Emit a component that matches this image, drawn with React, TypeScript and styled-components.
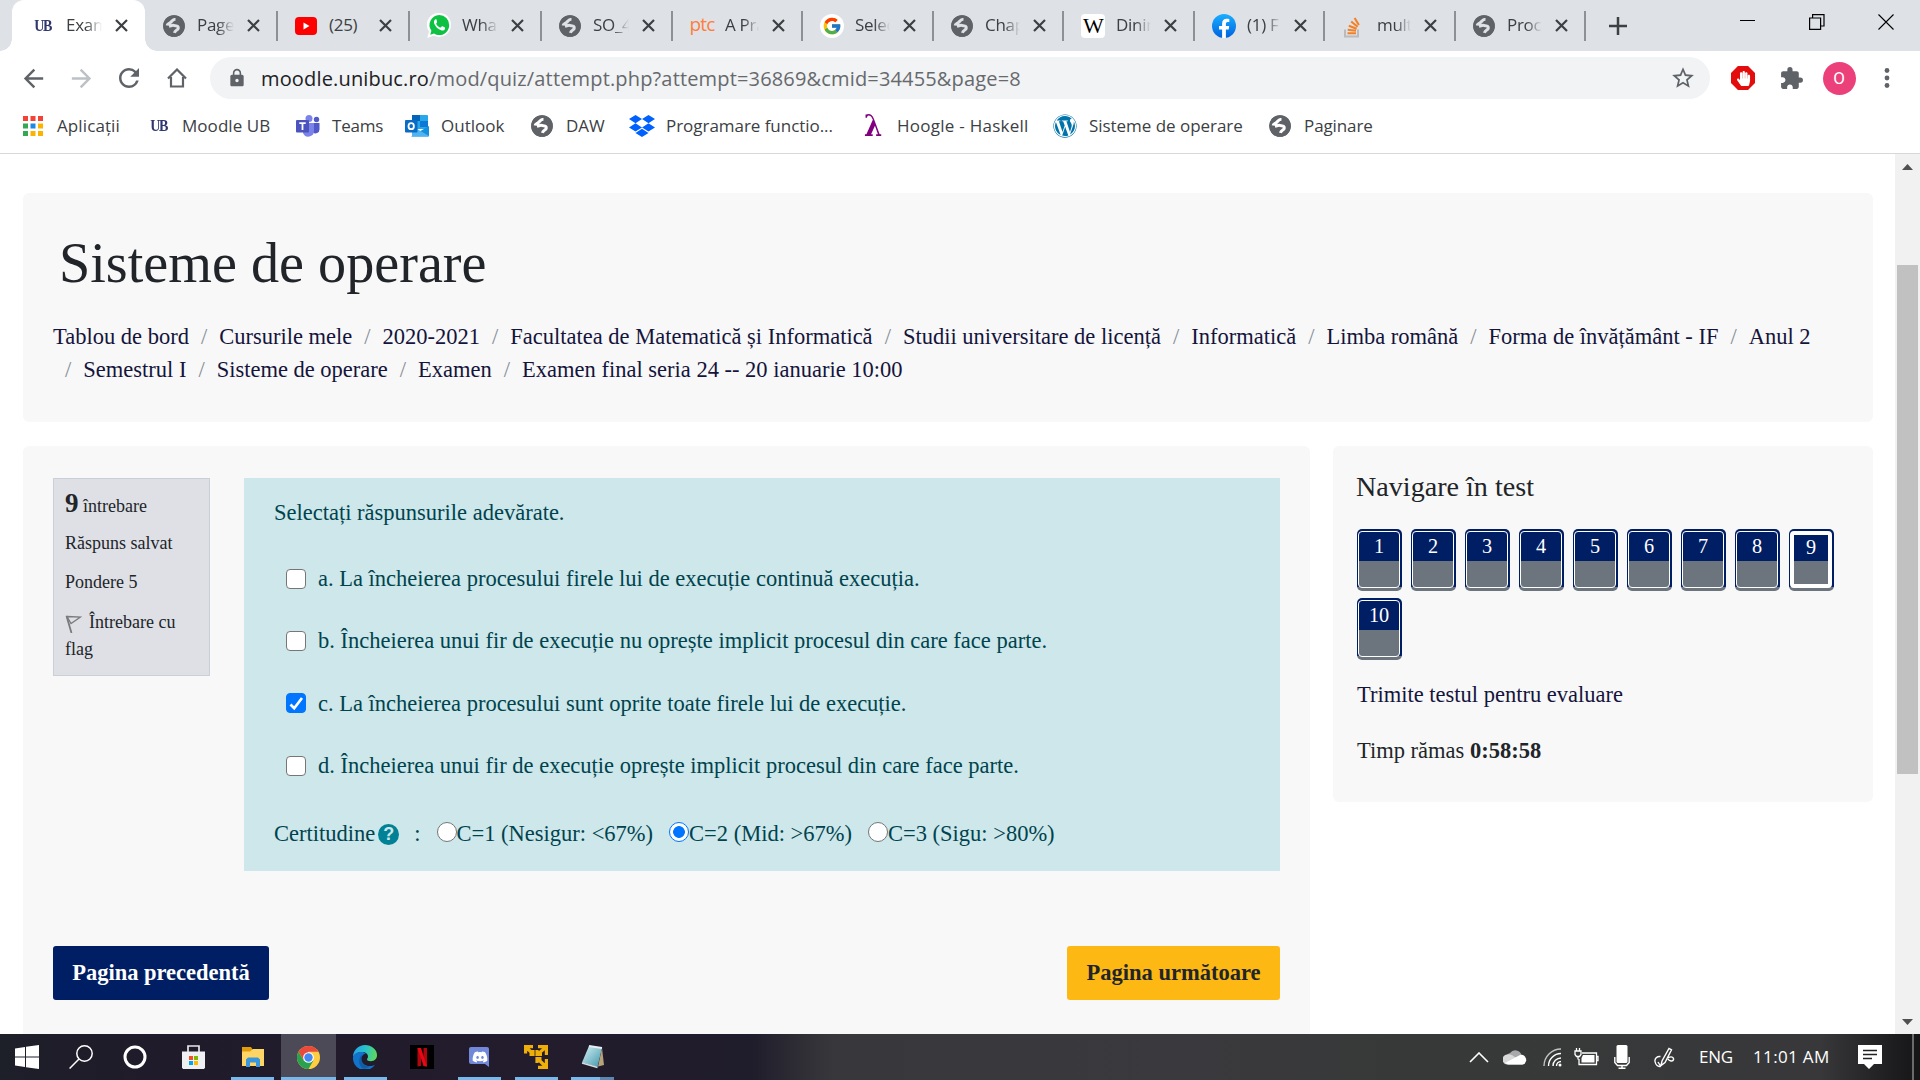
import React from "react";
import styled, { createGlobalStyle, css } from "styled-components";
import { FaWordpress, FaDropbox, FaDiscord, FaHandPaper } from "react-icons/fa";
import { FcGoogle } from "react-icons/fc";
import { MdExtension, MdLock, MdRefresh, MdStarBorder, MdArrowBack, MdArrowForward } from "react-icons/md";

const Global = createGlobalStyle`
  * { box-sizing: border-box; }
  html, body { margin: 0; padding: 0; background: #fff; overflow: hidden; }
  svg { display: block; flex: none; }
`;

const ui = `"Open Sans", "Noto Sans", sans-serif`;
const serif = `"Liberation Serif", "Times New Roman", serif`;

const Screen = styled.div`
  width: 1920px;
  height: 1080px;
  display: flex;
  flex-direction: column;
  overflow: hidden;
  font-family: ${ui};
`;

/* ---------- tab strip ---------- */

const TabStrip = styled.div`
  height: 51px;
  flex: none;
  display: flex;
  background: #dee1e6;
  padding-left: 12px;
`;

const TabBox = styled.div<{ $w: number; $active?: boolean; $line?: boolean }>`
  position: relative;
  width: ${(p) => p.$w}px;
  height: 51px;
  flex: none;
  display: flex;
  align-items: center;
  padding-left: 18px;
  ${(p) =>
    p.$active &&
    css`
      background: #fff;
      border-radius: 12px 12px 0 0;
      padding-left: 20px;
      &::before,
      &::after {
        content: "";
        position: absolute;
        bottom: 0;
        width: 12px;
        height: 12px;
      }
      &::before {
        left: -12px;
        background: radial-gradient(circle at 0 0, #dee1e6 11.5px, #fff 12px);
      }
      &::after {
        right: -12px;
        background: radial-gradient(circle at 100% 0, #dee1e6 11.5px, #fff 12px);
      }
    `}
  ${(p) =>
    p.$line &&
    css`
      &::after {
        content: "";
        position: absolute;
        right: -1px;
        top: 11px;
        width: 2px;
        height: 30px;
        background: #8d9095;
      }
    `}
`;

const IconSlot = styled.span<{ $w?: number }>`
  width: ${(p) => p.$w ?? 24}px;
  flex: none;
  display: flex;
  justify-content: center;
  align-items: center;
`;

const TabTitle = styled.span<{ $w?: number; $ml?: number; $full?: boolean }>`
  width: ${(p) => p.$w ?? 36}px;
  margin-left: ${(p) => p.$ml ?? 11}px;
  overflow: hidden;
  white-space: nowrap;
  font-size: 17px;
  line-height: 26px;
  letter-spacing: -0.3px;
  color: #3c4043;
  padding-bottom: 1px;
  ${(p) => !p.$full && css`
    -webkit-mask-image: linear-gradient(90deg, #000 55%, transparent 100%);
    mask-image: linear-gradient(90deg, #000 55%, transparent 100%);
  `}
`;

const TabClose = styled.span`
  margin-left: 13px;
  display: flex;
`;

const NewTab = styled.span`
  width: 66px;
  display: flex;
  align-items: center;
  justify-content: center;
`;

const WindowControls = styled.div`
  margin-left: auto;
  width: 207px;
  height: 43px;
  display: grid;
  grid-template-columns: repeat(3, 69px);
  align-items: center;
  justify-items: center;
`;

const Crest = styled.span`
  font-family: ${serif};
  font-weight: bold;
  font-size: 16px;
  line-height: 20px;
  letter-spacing: -1.4px;
  color: #30376f;
  transform: scaleX(0.88);
`;

const Ptc = styled.span`
  font-family: ${ui};
  font-weight: 500;
  font-size: 19px;
  letter-spacing: -0.9px;
  line-height: 20px;
  padding-bottom: 3px;
  color: #ff7e3b;
`;

const WikiTile = styled.span`
  width: 24px;
  height: 24px;
  border-radius: 4px;
  background: #fff;
  font-family: ${serif};
  font-size: 22px;
  line-height: 24px;
  letter-spacing: -1px;
  text-align: center;
  color: #000;
`;

const Disc = styled.span<{ $c: string }>`
  width: 24px;
  height: 24px;
  border-radius: 50%;
  background: ${(p) => p.$c};
  display: flex;
  align-items: center;
  justify-content: center;
`;

const Globe = ({ land = "#dee1e6" }: { land?: string }) => (
  <svg width="22" height="22" viewBox="0 0 22 22" fill="none">
    <circle cx="11" cy="11" r="10.800" fill="#5f6368" />
    <path
      d="M12.500 4.300C8.800 4.200 9.200 7 6.300 8.300c-1 .6-2.100 1-2.300 2.200M6 11.200c2.500-.5 2.200-1 5-.8 3.200.2 4.800 1.200 4.200 3.200-.6 1.700-3 1.300-3.800 4.300"
      stroke={land}
      strokeWidth="3"
    />
    <circle cx="11" cy="11" r="9.700" stroke="#5f6368" strokeWidth="2.200" />
  </svg>
);

const YouTube = () => (
  <svg width="22" height="22" viewBox="0 0 22 22">
    <rect y="2" width="22" height="18" rx="4" fill="#f00" />
    <path d="M8.500 7.500v7l6-3.500z" fill="#fff" />
  </svg>
);

const WhatsApp = () => (
  <svg width="24" height="26" viewBox="0 0 24 26">
    <path d="M12.300 0A11.600 11.600 0 0 1 24 12.300c0 6.500-5.200 11.600-11.700 11.600-2 0-3.900-.5-5.500-1.400L.3 25l1.700-6.500A11.800 11.800 0 0 1 12.300 0z" fill="#fff" />
    <path d="M12.300 2A10 10 0 0 1 22.200 12.200c0 5.500-4.500 9.900-9.900 9.900-1.900 0-3.700-.5-5.200-1.500L3.200 21.800l1.200-4A10 10 0 0 1 12.300 2z" fill="#0dc143" />
    <path d="M9.600 6.800c-.3-.6-.9-.6-1.400-.2-1.200 1-1.600 2.400-.8 4.300 1.300 3 3.700 5.300 6.800 6.400 1.500.6 3.200-.1 3.700-1.400.3-.9.200-1.300-.3-1.600l-2.100-1c-.6-.2-.9.1-1.500.9-.3.400-.6.400-1.100.2-1.800-.8-2.900-2-3.700-3.500-.2-.5.9-1.100.9-1.900z" fill="#fff" />
  </svg>
);

const CloseX = () => (
  <svg width="13" height="13" viewBox="0 0 13 13" stroke="#3c4043" strokeWidth="2.200">
    <path d="M1 1l11 11M12 1L1 12" />
  </svg>
);

const Facebook = () => (
  <svg width="24" height="24" viewBox="0 0 24 24">
    <defs>
      <linearGradient id="fb" x1="0" y1="0" x2="0" y2="1">
        <stop offset="0" stopColor="#19afff" />
        <stop offset="1" stopColor="#0062e0" />
      </linearGradient>
    </defs>
    <circle cx="12" cy="12" r="12" fill="url(#fb)" />
    <path
      d="M16.700 15.500l.5-3.500h-3.300V9.800c0-1 .5-1.900 1.900-1.900h1.500V5c-.9-.2-1.800-.3-2.700-.3-2.800 0-4.500 1.700-4.500 4.700V12H7v3.500h3.100v8.400h3.800v-8.400z"
      fill="#fff"
    />
  </svg>
);

const StackOverflow = () => (
  <svg width="20" height="24" viewBox="0 0 20 24" fill="none">
    <path d="M2 15.500v7h13v-7" stroke="#bcbbbb" strokeWidth="2" />
    <path d="M4.500 19.300h8.500M4.700 15.800l8.300 1M5.800 11.800l7.800 3M8.200 7.500l6.400 5.200M11.600 4l4.300 7" stroke="#f48024" strokeWidth="2.100" />
  </svg>
);

type TabSpec = { title: string; icon: React.ReactNode; w: number; full?: boolean; ml?: number; tw?: number };

const tabs: TabSpec[] = [
  { title: "Page", icon: <Globe />, w: 132, ml: 12, tw: 37 },
  { title: "(25)", icon: <YouTube />, w: 132, full: true, ml: 12, tw: 37 },
  { title: "Wha", icon: <WhatsApp />, w: 132 },
  { title: "SO_4", icon: <Globe />, w: 131, ml: 12 },
  { title: "A Pra", icon: <Ptc>ptc</Ptc>, w: 130, tw: 34 },
  { title: "Selec", icon: <Disc $c="#fff"><FcGoogle size={20} /></Disc>, w: 131, tw: 35 },
  { title: "Chap", icon: <Globe />, w: 130, ml: 12, tw: 35 },
  { title: "Dinin", icon: <WikiTile>W</WikiTile>, w: 131, tw: 35 },
  { title: "(1) F", icon: <Facebook />, w: 130, tw: 34 },
  { title: "multi", icon: <StackOverflow />, w: 131, ml: 13, tw: 34 },
  { title: "Proce", icon: <Globe />, w: 130, ml: 12, tw: 35 },
];

/* ---------- toolbar ---------- */

const Toolbar = styled.div`
  height: 54px;
  flex: none;
  display: flex;
  align-items: center;
  background: #fff;
`;

const NavButtons = styled.div`
  width: 210px;
  padding-left: 9px;
  display: grid;
  grid-template-columns: repeat(4, 48px);
  justify-items: center;
  align-items: center;
`;

const AddressBar = styled.div`
  width: 1500px;
  height: 42px;
  border-radius: 21px;
  background: #f1f3f4;
  display: flex;
  align-items: center;
  padding: 0 14px 0 17px;
`;

const Url = styled.span`
  margin-left: 14px;
  padding-top: 2px;
  font-size: 20px;
  line-height: 30px;
  letter-spacing: 0.16px;
  color: #67696d;
  white-space: nowrap;
  b {
    font-weight: 400;
    color: #202124;
  }
`;

const StarSlot = styled.span`
  margin-left: auto;
`;

const Extensions = styled.div`
  display: grid;
  grid-template-columns: 48px 48px 48px 48px;
  margin-left: 9px;
  justify-items: center;
  align-items: center;
`;

const Octagon = styled.span`
  width: 24px;
  height: 24px;
  background: #e40d0d;
  clip-path: polygon(29% 0, 71% 0, 100% 29%, 100% 71%, 71% 100%, 29% 100%, 0 71%, 0 29%);
  display: flex;
  align-items: center;
  justify-content: center;
`;

const Avatar = styled.span`
  width: 33px;
  height: 33px;
  border-radius: 50%;
  background: #ec407a;
  color: #fff;
  font-family: Roboto, sans-serif;
  font-size: 17px;
  line-height: 33px;
  text-align: center;
`;

/* ---------- bookmarks ---------- */

const Bookmarks = styled.div`
  height: 49px;
  flex: none;
  display: flex;
  align-items: center;
  padding: 0 0 6px 21px;
  border-bottom: 1px solid #d6d8db;
  background: #fff;
`;

const Bookmark = styled.span<{ $w: number; $track?: number }>`
  width: ${(p) => p.$w}px;
  flex: none;
  display: flex;
  align-items: center;
  gap: 12px;
  font-size: 17px;
  line-height: 26px;
  letter-spacing: ${(p) => p.$track ?? 0}px;
  color: #3c4043;
  white-space: nowrap;
`;

const AppsIcon = () => {
  const colors = ["#f44336", "#f44336", "#f44336", "#34a853", "#1e88e5", "#fbb300", "#34a853", "#fbb300", "#fbb300"];
  return (
    <svg width="20" height="20" viewBox="0 0 20 20">
      {colors.map((c, i) => (
        <rect key={i} x={(i % 3) * 7.5} y={Math.floor(i / 3) * 7.5} width="5" height="5" fill={c} />
      ))}
    </svg>
  );
};

const TeamsIcon = () => (
  <svg width="24" height="22" viewBox="0 0 24 22">
    <circle cx="20.500" cy="4.500" r="2.700" fill="#5059c9" />
    <circle cx="13" cy="3.500" r="3.500" fill="#7b83eb" />
    <path d="M17 8h6.500v6.500a4 4 0 0 1-6.500 3z" fill="#5059c9" />
    <path d="M7 8h11v8a5.700 5.700 0 0 1-11 2z" fill="#7b83eb" />
    <rect y="5" width="13" height="12.500" rx="1" fill="#4b53bc" />
    <path d="M3.300 8.200h6.400M6.500 8.200v6.800" stroke="#fff" strokeWidth="1.800" />
  </svg>
);

const OutlookIcon = () => (
  <svg width="24" height="22" viewBox="0 0 24 22">
    <rect x="7" width="16" height="14" rx="1" fill="#28a8ea" />
    <path d="M7 0h8v6H7z" fill="#0364b8" />
    <path d="M15 6h8v6h-8z" fill="#0f78d4" />
    <path d="M6 21.500L24 11v9.500a1 1 0 0 1-1 1z" fill="#1490df" />
    <path d="M24 21L7 11v10.500h16z" fill="#50b4f0" />
    <rect y="5" width="12.500" height="12.500" rx="1" fill="#0a6cc4" />
    <ellipse cx="6.200" cy="11.200" rx="2.700" ry="3" fill="none" stroke="#fff" strokeWidth="1.800" />
  </svg>
);

const Lambda = styled.span`
  font-family: "DejaVu Serif", serif;
  font-size: 29px;
  line-height: 24px;
  font-weight: bold;
  color: #800080;
  transform: scaleX(0.9);
`;

/* ---------- page ---------- */

const Viewport = styled.div`
  flex: 1;
  min-height: 0;
  display: flex;
  overflow: hidden;
  background: #fff;
  font-family: ${serif};
  font-size: 22.5px;
  line-height: 34px;
  color: #212529;
`;

const Page = styled.main`
  width: 1895px;
  padding: 39px 22px 0 23px;
  display: flex;
  flex-direction: column;
  gap: 24px;
`;

const HeaderCard = styled.header`
  height: 229px;
  flex: none;
  border-radius: 6px;
  background: #f8f8f8;
  padding: 36px 30px 0;
`;

const CourseTitle = styled.h1`
  margin: 0 0 23px 6px;
  font-size: 56.2px;
  font-weight: 400;
  line-height: 68px;
`;

const Crumbs = styled.ol`
  list-style: none;
  margin: 0;
  padding: 0;
  display: flex;
  flex-wrap: wrap;
  line-height: 33px;
  color: #14143c;
`;

const Crumb = styled.li`
  padding-left: 12px;
  white-space: nowrap;
  &:first-child {
    padding-left: 0;
  }
  &:not(:first-child)::before {
    content: "/";
    color: #868e96;
    padding-right: 12px;
  }
`;

const Columns = styled.div`
  display: flex;
  gap: 23px;
  align-items: flex-start;
`;

const QuizCard = styled.section`
  width: 1287px;
  height: 620px;
  border-radius: 6px;
  background: #f8f8f8;
  padding: 32px 30px 0;
`;

const QuestionRow = styled.div`
  display: flex;
  gap: 34px;
  align-items: flex-start;
`;

const InfoBox = styled.aside`
  width: 157px;
  height: 198px;
  border: 1px solid #cad0d7;
  background: #dee0e5;
  padding: 7px 11px;
  font-size: 18px;
  line-height: 27px;
`;

const QuestionNo = styled.div`
  height: 34px;
  line-height: 34px;
  strong {
    font-size: 27px;
  }
`;

const InfoLine = styled.div<{ $mt: number }>`
  margin-top: ${(p) => p.$mt}px;
`;

const Flag = styled.svg`
  && {
    display: inline-block;
  }
  width: 17px;
  height: 18px;
  margin-right: 7px;
  vertical-align: -5px;
`;

const QuestionBox = styled.div`
  width: 1036px;
  height: 393px;
  background: #cde7ea;
  color: #00434e;
  padding: 18px 30px 0;
`;

const Prompt = styled.p`
  margin: 0 0 32px;
`;

const Answer = styled.label`
  display: flex;
  align-items: center;
  height: 34px;
  margin: 0 0 28.4px 12px;
  gap: 12px;
`;

const CheckMark = styled.span<{ $on?: boolean }>`
  width: 20px;
  height: 20px;
  margin-bottom: 1px;
  border-radius: 4px;
  border: 1.5px solid ${(p) => (p.$on ? "#0075ff" : "#767676")};
  background: ${(p) => (p.$on ? "#0075ff" : "#fff")};
  display: flex;
  align-items: center;
  justify-content: center;
`;

const Certainty = styled.div`
  display: flex;
  align-items: center;
  height: 34px;
  margin-top: 34px;
  white-space: pre;
`;

const Help = styled.span`
  width: 21px;
  height: 21px;
  border-radius: 50%;
  margin-left: 3px;
  background: #008196;
  color: #cde7ea;
  font: bold 18px/21px "Liberation Sans", sans-serif;
  text-align: center;
`;

const Colon = styled.span`
  margin: 0 16px 0 15px;
`;

const Choice = styled.label`
  display: flex;
  align-items: center;
  margin-right: 16px;
`;

const Radio = styled.span<{ $on?: boolean }>`
  width: 20px;
  height: 20px;
  border-radius: 50%;
  margin-bottom: 5px;
  border: 1.5px solid ${(p) => (p.$on ? "#0075ff" : "#767676")};
  background: ${(p) => (p.$on ? "radial-gradient(circle, #0075ff 5.5px, #fff 6.2px)" : "#fff")};
`;

const Pager = styled.div`
  margin-top: 75px;
  display: flex;
  justify-content: space-between;
`;

const PagerButton = styled.button<{ $next?: boolean }>`
  width: ${(p) => (p.$next ? 213 : 216)}px;
  height: 54px;
  border: 0;
  border-radius: 3px;
  padding: 0;
  background: ${(p) => (p.$next ? "#fdb813" : "#001e64")};
  color: ${(p) => (p.$next ? "#212529" : "#fff")};
  font: bold 22.5px/54px ${serif};
`;

const NavCard = styled.aside`
  width: 540px;
  height: 356px;
  border-radius: 6px;
  background: #f8f8f8;
  padding: 24px 22px 0 24px;
`;

const NavTitle = styled.h2`
  margin: 0 0 25px -1px;
  font-size: 28.125px;
  font-weight: 400;
  line-height: 34px;
`;

const NavGrid = styled.div`
  display: grid;
  grid-template-columns: repeat(9, 45px);
  gap: 7px 9px;
  margin-bottom: 18px;
`;

const NavTile = styled.a<{ $current?: boolean }>`
  height: 62px;
  padding: 2px 2px 3px 1px;
  border-radius: 5px;
  background: linear-gradient(#001e64 0 58px, #6c757d 58px);
  display: block;
  > span {
    display: block;
    height: 57px;
    border: ${(p) => (p.$current ? "4px" : "1.5px")} solid #fff;
    border-radius: 4px;
    background: linear-gradient(#001e64 0 30px, #6c757d 30px) 0 ${(p) => (p.$current ? -4 : -1)}px no-repeat #6c757d;
    background-origin: padding-box;
    color: #fff;
    font-size: 20.25px;
    line-height: ${(p) => (p.$current ? 24 : 29)}px;
    text-align: center;
  }
`;

const NavLine = styled.p<{ $link?: boolean }>`
  margin: 0 0 22px;
  ${(p) => p.$link && "color: #14143c;"}
`;

const ScrollTrack = styled.div`
  width: 25px;
  background: #f1f1f1;
  display: flex;
  flex-direction: column;
  align-items: center;
  padding-top: 10px;
  padding-bottom: 9px;
`;

const Thumb = styled.div`
  width: 21px;
  height: 509px;
  margin-top: 95px;
  margin-bottom: auto;
  background: #c1c1c1;
`;

/* ---------- taskbar ---------- */

const Taskbar = styled.footer`
  height: 46px;
  flex: none;
  display: flex;
  background: linear-gradient(90deg, #1d1f29 0, #201b2a 150px, #221c2d 560px, #1f1c2b 750px, #2d2c34 795px, #38383c 835px, #3a393d 1200px, #373938 1400px, #38383a 1820px, #1d1d1f 1895px, #161617 1920px);
  color: #fff;
`;

const TaskItem = styled.span<{ $w: number; $run?: number; $active?: boolean; $split?: boolean }>`
  position: relative;
  width: ${(p) => p.$w}px;
  flex: none;
  display: flex;
  align-items: center;
  justify-content: center;
  ${(p) => p.$active && "background: #4c4a56;"}
  ${(p) =>
    p.$run &&
    css`
      &::after {
        content: "";
        position: absolute;
        bottom: 0;
        left: ${(p.$w - p.$run) / 2}px;
        width: ${p.$run}px;
        height: 3px;
        background: ${p.$split ? "linear-gradient(90deg, #76b9ed 29px, #5a88b0 29px)" : "#76b9ed"};
      }
    `}
`;

const Tray = styled.div`
  margin-left: auto;
  width: 465px;
  display: flex;
  align-items: center;
  padding-left: 14px;
`;

const TrayText = styled.span<{ $w: number; $track?: number }>`
  width: ${(p) => p.$w}px;
  flex: none;
  font-size: 17px;
  line-height: 24px;
  letter-spacing: ${(p) => p.$track ?? -0.2}px;
  white-space: nowrap;
`;

const TrayIcon = styled.span<{ $w: number }>`
  width: ${(p) => p.$w}px;
  flex: none;
  display: flex;
`;

const ShowDesktop = styled.span`
  width: 8px;
  height: 46px;
  margin-left: auto;
  border-left: 2px solid #6b6b6d;
`;

const Windows = () => (
  <svg width="24" height="24" viewBox="0 0 24 24" fill="#fff">
    <path d="M0 3.400l10-1.400v9.500H0zM11 1.800L24 0v11.500H11zM0 12.500h10V22L0 20.600zM11 12.500h13V24l-13-1.800z" />
  </svg>
);
const SearchGlyph = () => (
  <svg width="24" height="24" viewBox="0 0 24 24" fill="none" stroke="#fff" strokeWidth="1.500">
    <circle cx="15.500" cy="8.500" r="7.700" />
    <path d="M10 14L.6 23.500" />
  </svg>
);
const Cortana = () => (
  <svg width="24" height="24" viewBox="0 0 24 24">
    <circle cx="12" cy="12" r="10" fill="none" stroke="#fff" strokeWidth="3" />
  </svg>
);
const Store = () => (
  <svg width="23" height="24" viewBox="0 0 23 24">
    <path d="M6 7V1h11v6" fill="none" stroke="#e8e8ea" strokeWidth="1.700" />
    <path d="M0 6.500h23v16L22 24H1l-1-1.500z" fill="#eff0f2" />
    <path d="M7 11h4v4H7z" fill="#f25022" />
    <path d="M12 11h4v4h-4z" fill="#7fba00" />
    <path d="M7 16h4v4H7z" fill="#00a4ef" />
    <path d="M12 16h4v4h-4z" fill="#ffb900" />
  </svg>
);
const Explorer = () => (
  <svg width="22" height="20" viewBox="0 0 22 20">
    <path d="M0 0h9l2 3-2 2H0z" fill="#e09c0c" />
    <path d="M0 4.500h8l3-2.500h11v17H0z" fill="#ffd666" />
    <path d="M4 20v-7.500L6 10.500h10l2 2V20h-4v-4.500H8V20z" fill="#3a96dd" />
  </svg>
);
const Chrome = () => (
  <svg width="23" height="23" viewBox="0 0 24 24">
    <circle cx="12" cy="12" r="12" fill="#ffcd42" />
    <path d="M1.600 6A12 12 0 0 1 22.400 6H12L7 15z" fill="#ea4a3c" />
    <path d="M1.600 6A12 12 0 0 0 12 24l5.200-9H7z" fill="#2aa14f" />
    <circle cx="12" cy="12" r="5.600" fill="#fff" />
    <circle cx="12" cy="12" r="4.400" fill="#4587f3" />
  </svg>
);
const Edge = () => (
  <svg width="24" height="24" viewBox="0 0 24 24">
    <defs>
      <linearGradient id="eg" x1="0" y1="0.300" x2="1" y2="0.500">
        <stop offset="0" stopColor="#2b9fe8" />
        <stop offset=".5" stopColor="#28c4c9" />
        <stop offset="1" stopColor="#5fd85a" />
      </linearGradient>
    </defs>
    <path d="M0 12C0 5 5.500 0 12 0s12 4.500 12 10c0 4-2.700 6.200-6 6.200-2.800 0-4-1-4-2 0-.8 1-1.200 1-2.800 0-2.400-2.400-4.400-5.800-4.400C5 7 1.500 9 0 12z" fill="url(#eg)" />
    <path d="M0 12c1-3 4-5 8.500-5 2 0 3.500.6 4.500 1.500-3 .3-4.500 3-4.500 5.500 0 4.500 4 7 8 7 2.300 0 4.200-.6 5.700-1.600A12 12 0 0 1 0 12z" fill="#1173c9" />
    <path d="M9 13c-1 5 3 9 8 8-1.600 1.800-4 2.800-6 2.800C6 22 4 15 9 9.500 8.800 11 8.600 12 9 13z" fill="#114a8b" opacity=".55" />
  </svg>
);
const Netflix = () => (
  <svg width="24" height="24" viewBox="0 0 24 24">
    <path d="M0 0h24v24H0z" fill="#000" />
    <path d="M7.500 3H11v18l-3.500.4zM13.500 3H17v18.400l-3.500-.4z" fill="#b1060f" />
    <path d="M7.500 3H11l6 18.400-3.500-.4z" fill="#e50914" />
  </svg>
);
const DiscordTile = () => (
  <svg width="20" height="20" viewBox="0 0 20 20">
    <path d="M2 0h16a2 2 0 0 1 2 2v18l-4-3H2a2 2 0 0 1-2-2V2a2 2 0 0 1 2-2z" fill="#7289da" />
    <FaDiscord x="3" y="2" width="14" height="13" color="#fff" />
  </svg>
);
const VmWare = () => (
  <svg width="24" height="24" viewBox="0 0 24 24" fill="none" stroke="#f0ae0a" strokeWidth="3.200">
    <path d="M1.600 8.500V1.600H9M2 2l6.500 6.500M5.500 9.500H9V5M14 1.600h8.400V10M22 2l-8 7M13 5v4.500h5M22.400 14v8.400H14M13.500 13.500l8 8M13 18v-4.500h4.500" />
  </svg>
);
const Notepad = () => (
  <svg width="24" height="24" viewBox="0 0 24 24">
    <defs>
      <linearGradient id="np" x1="0" y1="0" x2="1" y2="1">
        <stop offset="0" stopColor="#d7f3f7" />
        <stop offset="1" stopColor="#3f95aa" />
      </linearGradient>
    </defs>
    <path d="M21 3l2 17-6 1.500z" fill="#b8a27a" />
    <path d="M8 1l13 2-4.500 19L1 17.500z" fill="url(#np)" />
    <path d="M8 1l13 2" stroke="#e9eef0" strokeWidth="2" />
    <path d="M1 18l15.500 4.500" stroke="#d6dde0" strokeWidth="1.500" />
  </svg>
);

const choices = [
  { text: "C=1 (Nesigur: <67%)" },
  { text: "C=2 (Mid: >67%)", on: true },
  { text: "C=3 (Sigu: >80%)" },
];

const crumbs = [
  "Tablou de bord", "Cursurile mele", "2020-2021", "Facultatea de Matematică și Informatică",
  "Studii universitare de licență", "Informatică", "Limba română", "Forma de învățământ - IF", "Anul 2",
  "Semestrul I", "Sisteme de operare", "Examen", "Examen final seria 24 -- 20 ianuarie 10:00",
];

const answers = [
  { text: "a. La încheierea procesului firele lui de execuție continuă execuția." },
  { text: "b. Încheierea unui fir de execuție nu oprește implicit procesul din care face parte." },
  { text: "c. La încheierea procesului sunt oprite toate firele lui de execuție.", on: true },
  { text: "d. Încheierea unui fir de execuție oprește implicit procesul din care face parte." },
];

export default function App() {
  return (
    <Screen>
      <Global />
      <TabStrip>
        <TabBox $w={133} $active>
          <IconSlot $w={22}><Crest>UB</Crest></IconSlot>
          <TabTitle $ml={12}>Exam</TabTitle>
          <TabClose><CloseX /></TabClose>
        </TabBox>
        {tabs.map((t) => (
          <TabBox key={t.title} $w={t.w} $line>
            <IconSlot $w={t.ml ? 22 : 24}>{t.icon}</IconSlot>
            <TabTitle $ml={t.ml} $w={t.tw} $full={t.full}>{t.title}</TabTitle>
            <TabClose><CloseX /></TabClose>
          </TabBox>
        ))}
        <NewTab>
          <svg width="18" height="18" viewBox="0 0 18 18" stroke="#3c4043" strokeWidth="2.500"><path d="M9 0v18M0 9h18" /></svg>
        </NewTab>
        <WindowControls>
          <svg width="15" height="15" viewBox="0 0 15 15" stroke="#000"><path d="M0 6.500h15" /></svg>
          <svg width="16" height="16" viewBox="0 0 16 16" stroke="#000" fill="none" strokeWidth="1.200"><path d="M.6 4h11v11.400H.6zM3.600 4V.6h11.400V12h-3.400" /></svg>
          <svg width="16" height="16" viewBox="0 0 16 16" stroke="#000" strokeWidth="1.100"><path d="M.5.5l15 15M15.500.5l-15 15" /></svg>
        </WindowControls>
      </TabStrip>

      <Toolbar>
        <NavButtons>
          <MdArrowBack size={29} color="#5f6368" />
          <MdArrowForward size={29} color="#bdc1c6" />
          <MdRefresh size={30} color="#5f6368" />
          <svg width="20" height="20" viewBox="0 0 20 20" fill="none" stroke="#5f6368" strokeWidth="2.200"><path d="M1 10.500L10 1.500l9 9M4 9v9.500h12V9" /></svg>
        </NavButtons>
        <AddressBar>
          <MdLock size={20} color="#5f6368" />
          <Url><b>moodle.unibuc.ro</b>/mod/quiz/attempt.php?attempt=36869&amp;cmid=34455&amp;page=8</Url>
          <StarSlot><MdStarBorder size={26} color="#5f6368" /></StarSlot>
        </AddressBar>
        <Extensions>
          <Octagon><FaHandPaper size={15} color="#fff" /></Octagon>
          <MdExtension size={25} color="#5f6368" />
          <Avatar>O</Avatar>
          <svg width="6" height="20" viewBox="0 0 6 20" fill="#5f6368"><circle cx="3" cy="2.500" r="2.400" /><circle cx="3" cy="10" r="2.400" /><circle cx="3" cy="17.500" r="2.400" /></svg>
        </Extensions>
      </Toolbar>

      <Bookmarks>
        <Bookmark $w={126} $track={0.1}><IconSlot><AppsIcon /></IconSlot>Aplicații</Bookmark>
        <Bookmark $w={149} $track={0.05}><IconSlot $w={23}><Crest>UB</Crest></IconSlot>Moodle UB</Bookmark>
        <Bookmark $w={109} $track={-0.2}><IconSlot><TeamsIcon /></IconSlot>Teams</Bookmark>
        <Bookmark $w={125}><IconSlot><OutlookIcon /></IconSlot>Outlook</Bookmark>
        <Bookmark $w={100}><IconSlot><Globe land="#fff" /></IconSlot>DAW</Bookmark>
        <Bookmark $w={231} $track={-0.04}><IconSlot><FaDropbox size={26} color="#0061ff" /></IconSlot>Programare functio...</Bookmark>
        <Bookmark $w={192} $track={0.26}><IconSlot><Lambda>λ</Lambda></IconSlot>Hoogle - Haskell</Bookmark>
        <Bookmark $w={215} $track={-0.04}><IconSlot><FaWordpress size={24} color="#0073aa" /></IconSlot>Sisteme de operare</Bookmark>
        <Bookmark $w={110} $track={-0.1}><IconSlot><Globe land="#fff" /></IconSlot>Paginare</Bookmark>
      </Bookmarks>

      <Viewport>
        <Page>
          <HeaderCard>
            <CourseTitle>Sisteme de operare</CourseTitle>
            <Crumbs>{crumbs.map((c) => <Crumb key={c}>{c}</Crumb>)}</Crumbs>
          </HeaderCard>
          <Columns>
            <QuizCard>
              <QuestionRow>
                <InfoBox>
                  <QuestionNo><strong>9</strong> întrebare</QuestionNo>
                  <InfoLine $mt={10}>Răspuns salvat</InfoLine>
                  <InfoLine $mt={12}>Pondere 5</InfoLine>
                  <InfoLine $mt={13}>
                    <Flag viewBox="0 0 17 18" fill="none" stroke="#7b7b7b">
                      <path d="M1.500 1l5 17" strokeWidth="1.800" />
                      <path d="M2 1.500l13.500 .5-9.500 6.500z" strokeWidth="1.300" />
                    </Flag>
                    Întrebare cu flag
                  </InfoLine>
                </InfoBox>
                <QuestionBox>
                  <Prompt>Selectați răspunsurile adevărate.</Prompt>
                  {answers.map((a) => (
                    <Answer key={a.text}>
                      <CheckMark $on={a.on}>
                        {a.on && <svg width="15" height="15" viewBox="0 0 15 15" fill="none" stroke="#fff" strokeWidth="2.700"><path d="M1.500 8.500l3.700 3.700L13 2" /></svg>}
                      </CheckMark>
                      {a.text}
                    </Answer>
                  ))}
                  <Certainty>
                    Certitudine<Help>?</Help><Colon>:</Colon>
                    {choices.map((c) => <Choice key={c.text}><Radio $on={c.on} />{c.text}</Choice>)}
                  </Certainty>
                </QuestionBox>
              </QuestionRow>
              <Pager>
                <PagerButton>Pagina precedentă</PagerButton>
                <PagerButton $next>Pagina următoare</PagerButton>
              </Pager>
            </QuizCard>
            <NavCard>
              <NavTitle>Navigare în test</NavTitle>
              <NavGrid>
                {[1, 2, 3, 4, 5, 6, 7, 8, 9, 10].map((n) => <NavTile key={n} $current={n === 9}><span>{n}</span></NavTile>)}
              </NavGrid>
              <NavLine $link>Trimite testul pentru evaluare</NavLine>
              <NavLine>Timp rămas <b>0:58:58</b></NavLine>
            </NavCard>
          </Columns>
        </Page>
        <ScrollTrack>
          <svg width="11" height="6" viewBox="0 0 11 6" fill="#505050"><path d="M0 6L5.500 0 11 6z" /></svg>
          <Thumb />
          <svg width="11" height="6" viewBox="0 0 11 6" fill="#505050"><path d="M0 0l5.500 6L11 0z" /></svg>
        </ScrollTrack>
      </Viewport>

      <Taskbar>
        <TaskItem $w={54}><Windows /></TaskItem>
        <TaskItem $w={54}><SearchGlyph /></TaskItem>
        <TaskItem $w={54}><Cortana /></TaskItem>
        <TaskItem $w={62}><Store /></TaskItem>
        <TaskItem $w={57} $run={43}><Explorer /></TaskItem>
        <TaskItem $w={55} $run={55} $active><Chrome /></TaskItem>
        <TaskItem $w={58} $run={43}><Edge /></TaskItem>
        <TaskItem $w={56}><Netflix /></TaskItem>
        <TaskItem $w={58} $run={43}><DiscordTile /></TaskItem>
        <TaskItem $w={56} $run={43}><VmWare /></TaskItem>
        <TaskItem $w={57} $run={43} $split><Notepad /></TaskItem>
        <Tray>
          <TrayIcon $w={34}><svg width="20" height="11" viewBox="0 0 20 11" fill="none" stroke="#fff" strokeWidth="1.600"><path d="M1 10l9-9 9 9" /></svg></TrayIcon>
          <TrayIcon $w={40}>
            <svg width="24" height="16" viewBox="0 0 24 16">
              <path d="M3 9a6 6 0 0 1 4-5A6.500 6.500 0 0 1 18.500 6L12 10z" fill="#a9a9ab" />
              <path d="M5 15.500a5 5 0 0 1-1-10c3-.7 5 .5 7 2l11 6.500a5 5 0 0 1-3 1.500z" fill="#d9d9da" />
              <path d="M2 14l15-8a5 5 0 0 1 3 9.500H5z" fill="#fff" />
            </svg>
          </TrayIcon>
          <TrayIcon $w={31}>
            <svg width="19" height="19" viewBox="0 0 19 19" fill="none" stroke="#fff" strokeWidth="1.400">
              <path d="M1 18A17 17 0 0 1 18 1" opacity=".7" />
              <path d="M5.500 18A12.500 12.500 0 0 1 18 5.500M10 18a8 8 0 0 1 8-8M13.500 18a4.500 4.500 0 0 1 4.500-4.500" />
              <circle cx="17" cy="17" r="1.500" fill="#fff" stroke="none" />
            </svg>
          </TrayIcon>
          <TrayIcon $w={40}>
            <svg width="25" height="18" viewBox="0 0 25 18" fill="none" stroke="#fff" strokeWidth="1.300">
              <path d="M8 5h14.500v11.500H5V11M22.500 8.500H24v4h-1.500M2.500 0v3M5.500 0v3M1 3h6v3.500L5.500 8.500h-3L1 6.500zM4 8.500v3" />
              <path d="M9 7h11.500v7.500H7.500V10z" fill="#fff" stroke="none" />
            </svg>
          </TrayIcon>
          <TrayIcon $w={40}>
            <svg width="16" height="24" viewBox="0 0 16 24" fill="none" stroke="#fff" strokeWidth="1.400">
              <rect x="2.500" y="0" width="11" height="18" rx="1.500" fill="#fff" stroke="none" />
              <path d="M.8 12v5.500L3.500 20.500h9l2.700-3V12M8 20.500v3M4.500 23.300h7" />
            </svg>
          </TrayIcon>
          <TrayIcon $w={45}>
            <svg width="21" height="21" viewBox="0 0 21 21" fill="none" stroke="#fff" strokeWidth="1.400">
              <path d="M7 18.500L8 14l7-12.500 2.500 1.300L11 15.500zM6.500 9.500C3 9 .5 11.500 1 14.500s3 6 6 4.500M4 15l2.500 4M14 11c3-2 6-1 5.500 1.500S15 14 14 12" />
            </svg>
          </TrayIcon>
          <TrayText $w={54}>ENG</TrayText>
          <TrayText $w={105} $track={0.35}>11:01 AM</TrayText>
          <svg width="24" height="24" viewBox="0 0 24 24">
            <path d="M0 0h24v19h-8l-5 5-5-5H0z" fill="#fff" />
            <path d="M5 5.500h14M5 9.500h14M5 13.500h9" stroke="#222" strokeWidth="1.300" />
          </svg>
          <ShowDesktop />
        </Tray>
      </Taskbar>
    </Screen>
  );
}
